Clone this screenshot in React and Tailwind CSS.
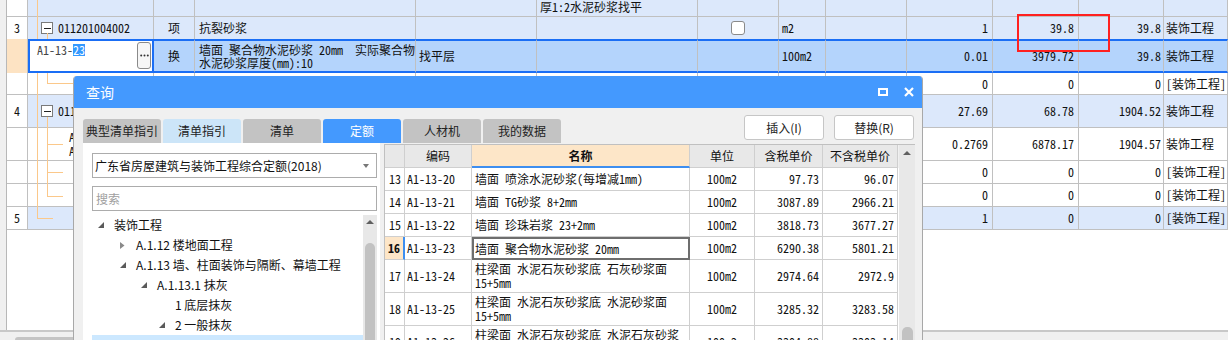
import React from "react";

const COLS = "grid grid-cols-[21px_126px_41px_221px_121px_161px_81px_47px_81px_86px_86px_85px_64px]";
const MONO = "font-['Noto_Sans_Mono_CJK_SC','Noto_Sans_CJK_SC',monospace]";
const SANS = "font-['Noto_Sans_CJK_SC','Noto_Sans',sans-serif]";
const GB = "border-r border-[#c0c0c0]";
const SELB = "border-r border-r-[#c0c0c0] border-y-2 border-y-[#1a6ef5]";
const LB = "bg-[#dce8fb]";

const N = "justify-end pr-[4px]";
const N2 = "justify-end pr-[2px]";
const CT = "justify-center";
const L = "pl-[3px]";

function Row({ h, bg = "bg-white", numBg = "bg-white", rb = "border-b border-[#c0c0c0]", cb = GB, cells }) {
  return (
    <div className={`${COLS} ${h} ${rb}`}>
      {cells.map((c, i) => (
        <div
          key={i}
          className={`flex items-center overflow-hidden whitespace-pre ${c && c.b ? c.b : cb} ${c && c.bg ? c.bg : i === 0 ? numBg : bg} ${c && c.cls ? c.cls : ""}`}
        >
          {c ? c.v : null}
        </div>
      ))}
    </div>
  );
}

function Box() {
  return (
    <span className="w-[12px] h-[12px] border border-[#7a7a7a] bg-white flex items-center justify-center shrink-0">
      <span className="w-[7px] h-[1px] bg-[#222]" />
    </span>
  );
}

function Check() {
  return <span className="w-[14px] h-[14px] rounded-[3px] border border-[#8a8a8a] bg-white" />;
}

function CodeEdit() {
  return (
    <div className="self-stretch flex-1 flex items-start pl-[7px] pr-[1px]">
      <span className="mt-[3px] h-[12px] leading-[12px] text-[#444]">A1-13-</span>
      <span className="mt-[3px] inline-block h-[12px] leading-[12px] bg-[#3399ff] text-white">23</span>
      <span className="ml-auto mt-[1px] w-[14px] h-[27px] border border-[#8a8a8a] rounded-[3px] bg-[#f6f6f6] flex items-center justify-center">
        <svg width="9" height="3">
          <circle cx="1.2" cy="1.5" r="1" fill="#333" />
          <circle cx="4.5" cy="1.5" r="1" fill="#333" />
          <circle cx="7.8" cy="1.5" r="1" fill="#333" />
        </svg>
      </span>
    </div>
  );
}

const E = null;

function MainGrid() {
  return (
    <div className="relative flex-1">
      <Row
        h="h-[17px]"
        bg={LB}
        cells={[E, E, E, E, E, { v: "厚1:2水泥砂浆找平", cls: "pl-[3px] pb-[3px]" }, E, E, E, E, E, E, E]}
      />
      <Row
        h="h-[22px]"
        bg={LB}
        rb=""
        cells={[
          { v: "3", cls: CT },
          { v: <><Box /><span className="ml-[5px]">011201004002</span></>, cls: "pl-[13px]" },
          { v: "项", cls: CT },
          { v: "抗裂砂浆", cls: "pl-[4px]" },
          E,
          E,
          { v: <Check />, cls: CT },
          { v: "m2", cls: L },
          E,
          { v: "1", cls: N },
          { v: "39.8", cls: N },
          { v: "39.8", cls: N2 },
          { v: "装饰工程", cls: "pl-[2px]" },
        ]}
      />
      <Row
        h="h-[34px]"
        bg="bg-[#b4d4fc]"
        rb=""
        cb={SELB}
        cells={[
          { v: null, b: GB, bg: "bg-[#fde3c3]" },
          { v: <CodeEdit />, b: "border-2 border-[#1a6ef5]", bg: "bg-white" },
          { v: "换", cls: CT },
          {
            v: (
              <div className="leading-[13px]">
                <div>墙面 聚合物水泥砂浆 20mm  实际聚合物</div>
                <div>水泥砂浆厚度(mm):10</div>
              </div>
            ),
            cls: "pl-[4px]",
          },
          { v: <span className={SANS}>找平层</span>, cls: L },
          E,
          E,
          { v: "100m2", cls: L },
          E,
          { v: "0.01", cls: N },
          { v: "3979.72", cls: N },
          { v: "39.8", cls: N2 },
          { v: "装饰工程", cls: "pl-[2px]" },
        ]}
      />
      <Row
        h="h-[22px]"
        cells={[E, E, E, E, E, E, E, E, E, { v: "0", cls: N }, { v: "0", cls: N }, { v: "0", cls: N2 }, { v: "[装饰工程]", cls: "pl-[2px]" }]}
      />
      <Row
        h="h-[33px]"
        bg={LB}
        cells={[
          { v: "4", cls: CT },
          { v: <><Box /><span className="ml-[5px]">011201001001</span></>, cls: "pl-[13px]" },
          E,
          E,
          E,
          E,
          E,
          E,
          E,
          { v: "27.69", cls: N },
          { v: "68.78", cls: N },
          { v: "1904.52", cls: N2 },
          { v: "装饰工程", cls: "pl-[2px]" },
        ]}
      />
      <Row
        h="h-[33px]"
        cells={[
          E,
          {
            v: (
              <div className="leading-[14px]">
                <div>A1-13-1</div>
                <div>A1-13-2</div>
              </div>
            ),
            cls: "pl-[41px]",
          },
          E,
          E,
          E,
          E,
          E,
          E,
          E,
          { v: "0.2769", cls: N },
          { v: "6878.17", cls: N },
          { v: "1904.57", cls: N2 },
          { v: "装饰工程", cls: "pl-[2px]" },
        ]}
      />
      <Row
        h="h-[23px]"
        cells={[E, E, E, E, E, E, E, E, E, { v: "0", cls: N }, { v: "0", cls: N }, { v: "0", cls: N2 }, { v: "[装饰工程]", cls: "pl-[2px]" }]}
      />
      <Row
        h="h-[23px]"
        cells={[E, E, E, E, E, E, E, E, E, { v: "0", cls: N }, { v: "0", cls: N }, { v: "0", cls: N2 }, { v: "[装饰工程]", cls: "pl-[2px]" }]}
      />
      <Row
        h="h-[23px]"
        bg={LB}
        cells={[
          { v: "5", cls: CT },
          E,
          E,
          E,
          E,
          E,
          E,
          E,
          E,
          { v: "1", cls: N },
          { v: "0", cls: N },
          { v: "0", cls: N2 },
          { v: "[装饰工程]", cls: "pl-[2px]" },
        ]}
      />
      <svg className="absolute left-0 top-0 pointer-events-none" width="80" height="230">
        <g stroke="#fbc88a" strokeWidth="1" shapeRendering="crispEdges">
          <line x1="30.5" y1="0" x2="30.5" y2="39" />
          <line x1="30.5" y1="73" x2="30.5" y2="218.5" />
          <line x1="30" y1="218.5" x2="46" y2="218.5" />
          <line x1="40.5" y1="33" x2="40.5" y2="39" />
          <line x1="40.5" y1="73" x2="40.5" y2="83.5" />
          <line x1="40" y1="83.5" x2="70" y2="83.5" />
          <line x1="40.5" y1="117" x2="40.5" y2="196.5" />
          <line x1="40" y1="144.5" x2="56" y2="144.5" />
          <line x1="40" y1="172.5" x2="56" y2="172.5" />
          <line x1="40" y1="196.5" x2="56" y2="196.5" />
        </g>
      </svg>
    </div>
  );
}

function Down() {
  return (
    <svg width="6" height="6">
      <path d="M6 0V6H0Z" fill="#5a5a5a" />
    </svg>
  );
}
function Right() {
  return (
    <svg width="5" height="7">
      <path d="M0 0L4.5 3.5L0 7Z" fill="#8a8a8a" />
    </svg>
  );
}

const TREE = [
  { pl: "pl-[6px]", a: "d", t: "装饰工程" },
  { pl: "pl-[28px]", a: "r", t: "A.1.12 楼地面工程" },
  { pl: "pl-[28px]", a: "d", t: "A.1.13 墙、柱面装饰与隔断、幕墙工程" },
  { pl: "pl-[49px]", a: "d", t: "A.1.13.1 抹灰" },
  { pl: "pl-[83px]", a: null, t: "1 底层抹灰" },
  { pl: "pl-[67px]", a: "d", t: "2 一般抹灰" },
  { pl: "pl-[83px]", a: null, t: "", sel: true },
];

function LeftPanel() {
  return (
    <div className="ml-[9px] w-[297px] bg-white pt-[10px] pl-[9px] pr-[3px] text-[12px] text-[#111]">
      <div className="h-[25px] border border-[#acacac] flex items-center pl-[2px] pr-[7px]">
        <span>广东省房屋建筑与装饰工程综合定额(2018)</span>
        <svg className="ml-auto" width="6" height="4">
          <path d="M0 0H6L3 4Z" fill="#777" />
        </svg>
      </div>
      <div className="mt-[8px] h-[25px] border border-[#acacac] flex items-center pl-[3px] text-[#a0a0a0]">搜索</div>
      <div className="mt-[4px] flex">
        <div className="w-[271px]">
          {TREE.map((it, i) => (
            <div key={i} className={`h-[20px] flex items-center ${it.pl} ${it.sel ? "bg-[#cce8ff]" : ""}`}>
              {it.a ? (
                <span className="w-[16px] flex items-center">{it.a === "d" ? <Down /> : <Right />}</span>
              ) : null}
              <span className="whitespace-nowrap">{it.t}</span>
            </div>
          ))}
        </div>
        <div className="w-[14px] h-[160px] bg-[#e8e8e8] flex flex-col items-center pt-[5px]">
          <svg width="8" height="4">
            <path d="M0 4L4 0L8 4Z" fill="#606060" />
          </svg>
          <div className="mt-[19px] w-[10px] h-[120px] rounded-[5px] bg-[#c2c2c2]" />
        </div>
      </div>
    </div>
  );
}

const TC = "grid grid-cols-[20px_67px_218px_65px_68px_75px]";
const TB = "border-r border-b border-[#cfcfcf]";

const DROWS = [
  { n: "13", c: "A1-13-20", name: ["墙面 喷涂水泥砂浆(每增减1mm)"], a: "97.73", b: "96.07", h: "h-[23px]" },
  { n: "14", c: "A1-13-21", name: ["墙面 TG砂浆 8+2mm"], a: "3087.89", b: "2966.21", h: "h-[23px]" },
  { n: "15", c: "A1-13-22", name: ["墙面 珍珠岩浆 23+2mm"], a: "3818.73", b: "3677.27", h: "h-[23px]" },
  { n: "16", c: "A1-13-23", name: ["墙面 聚合物水泥砂浆 20mm"], a: "6290.38", b: "5801.21", h: "h-[23px]", sel: true },
  { n: "17", c: "A1-13-24", name: ["柱梁面 水泥石灰砂浆底 石灰砂浆面", "15+5mm"], a: "2974.64", b: "2972.9", h: "h-[33px]" },
  { n: "18", c: "A1-13-25", name: ["柱梁面 水泥石灰砂浆底 水泥砂浆面", "15+5mm"], a: "3285.32", b: "3283.58", h: "h-[33px]" },
  { n: "19", c: "A1-13-26", name: ["柱梁面 水泥石灰砂浆底 水泥石灰砂浆", "面 15+5mm"], a: "3304.88", b: "3303.14", h: "h-[33px]" },
];

function DTable() {
  return (
    <div className={`ml-[4px] mt-[1px] w-[531px] border-l border-t border-[#c0c0c0] flex text-[12px] text-[#111] ${MONO}`}>
      <div className="w-[514px]">
        <div className={`${TC} h-[23px] ${SANS}`}>
          <div className={`bg-[#e8e8e8] ${TB}`} />
          <div className={`bg-[#e8e8e8] ${TB} flex items-center justify-center`}>编码</div>
          <div className="bg-[#fde6c8] border-r border-[#cfcfcf] border-b-2 border-b-[#3d8ef0] flex items-center justify-center font-bold">名称</div>
          <div className={`bg-[#e8e8e8] ${TB} flex items-center justify-center`}>单位</div>
          <div className={`bg-[#e8e8e8] ${TB} flex items-center justify-center`}>含税单价</div>
          <div className={`bg-[#e8e8e8] ${TB} flex items-center justify-center`}>不含税单价</div>
        </div>
        {DROWS.map((r) => (
          <div key={r.n} className={`${TC} ${r.h} bg-white`}>
            <div
              className={
                r.sel
                  ? "border-b border-r-2 border-[#cfcfcf] border-r-[#3d8ef0] bg-[#fde6c8] flex items-center pl-[3px] font-bold"
                  : `${TB} flex items-center pl-[4px]`
              }
            >
              {r.n}
            </div>
            <div className={`${TB} flex items-center pl-[2px]`}>{r.c}</div>
            <div
              className={
                r.sel
                  ? "border-2 border-[#6e6e6e] flex items-center pl-[1px] whitespace-pre"
                  : `${TB} flex items-center pl-[3px] whitespace-pre`
              }
            >
              <div className="leading-[14px]">
                {r.name.map((t, i) => (
                  <div key={i}>{t}</div>
                ))}
              </div>
            </div>
            <div className={`${TB} flex items-center justify-center`}>100m2</div>
            <div className={`${TB} flex items-center justify-end pr-[3px]`}>{r.a}</div>
            <div className={`${TB} flex items-center justify-end pr-[3px]`}>{r.b}</div>
          </div>
        ))}
      </div>
      <div className="w-[16px] bg-[#e8e8e8] flex flex-col items-center pt-[6px]">
        <svg width="8" height="4">
          <path d="M0 4L4 0L8 4Z" fill="#606060" />
        </svg>
        <div className="mt-[172px] w-[11px] h-[40px] rounded-[5px] bg-[#c2c2c2]" />
      </div>
    </div>
  );
}

const TABS = [
  { t: "典型清单指引", c: "bg-[#c3c3c3] text-[#222]" },
  { t: "清单指引", c: "bg-[#cce5f8] text-[#222]" },
  { t: "清单", c: "bg-[#c3c3c3] text-[#222]" },
  { t: "定额", c: "bg-[#4499fe] text-white" },
  { t: "人材机", c: "bg-[#c3c3c3] text-[#222]" },
  { t: "我的数据", c: "bg-[#c3c3c3] text-[#222]" },
];

function Dialog() {
  return (
    <div className={`absolute left-[73px] top-[76px] w-[850px] h-[280px] flex flex-col bg-[#f0f0f0] border-x border-[#a8a8a8] rounded-t-[4px] overflow-hidden ${SANS}`}>
      <div className="h-[32px] shrink-0 bg-[#4499fe] flex items-center pl-[12px] pr-[8px] text-white text-[14px]">
        <span>查询</span>
        <div className="ml-auto flex items-center gap-[16px]">
          <svg width="10" height="8">
            <rect x="1" y="1" width="8" height="6" fill="none" stroke="#fff" strokeWidth="2" />
          </svg>
          <svg width="10" height="10">
            <path d="M1 1L9 9M9 1L1 9" stroke="#fff" strokeWidth="2.2" />
          </svg>
        </div>
      </div>
      <div className="h-[35px] shrink-0 flex items-end pl-[9px] pr-[8px] pt-[7px] text-[12px]">
        <div className="flex gap-[2px]">
          {TABS.map((t) => (
            <div key={t.t} className={`w-[78px] h-[24px] rounded-t-[3px] flex items-center justify-center whitespace-nowrap overflow-hidden ${t.c}`}>
              {t.t}
            </div>
          ))}
        </div>
        <div className="ml-auto self-start flex gap-[10px] text-[#222]">
          <div className="w-[80px] h-[25px] bg-white border border-[#c6c6c6] rounded-[3px] flex items-center justify-center">插入(I)</div>
          <div className="w-[80px] h-[25px] bg-white border border-[#c6c6c6] rounded-[3px] flex items-center justify-center">替换(R)</div>
        </div>
      </div>
      <div className="flex-1 flex">
        <LeftPanel />
        <DTable />
      </div>
    </div>
  );
}

export default function App() {
  return (
    <div className={`relative w-[1228px] h-[340px] overflow-hidden bg-white text-[12px] text-[#111] ${MONO}`}>
      <div className="flex h-[330px]">
        <div className="w-[7px] shrink-0 bg-[#f0f0f0] border-r border-[#b8b8b8]" />
        <MainGrid />
      </div>
      <div className="h-[10px] border-t-2 border-[#c8c8c8] bg-[#f0f0f0] pt-[5px] pl-[15px]">
        <div className="w-[600px] h-[6px] rounded-[3px] bg-[#c4c4c4]" />
      </div>
      <Dialog />
      <div className="absolute left-[1017px] top-[14px] w-[93px] h-[38px] border-2 border-[#ff2020]" />
    </div>
  );
}
